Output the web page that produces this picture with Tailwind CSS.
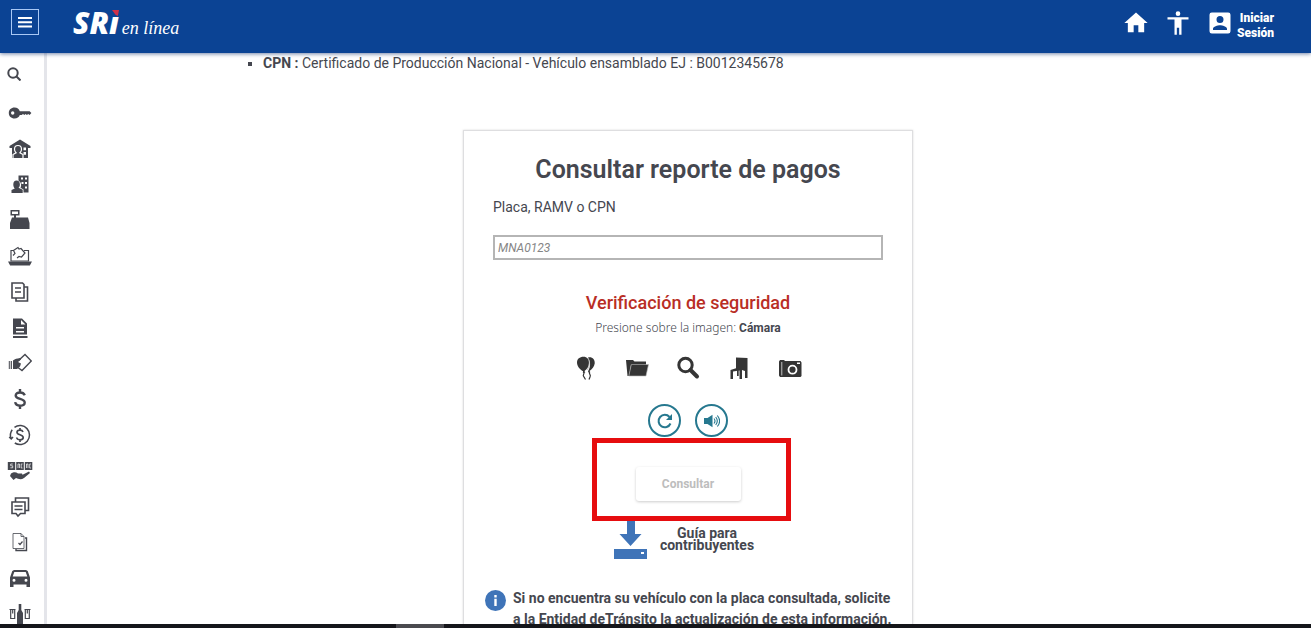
<!DOCTYPE html>
<html lang="es">
<head>
<meta charset="utf-8">
<meta name="viewport" content="width=device-width, initial-scale=1">
<title>SRI en línea</title>
<script src="https://cdn.jsdelivr.net/npm/@tailwindcss/browser@4"></script>
</head>
<body class="flex h-screen flex-col overflow-hidden bg-white font-['Roboto','Liberation_Sans',sans-serif] text-[#45474f]">
<header class="relative z-10 flex h-[53px] shrink-0 items-start bg-[#0b4394] pr-9 pl-[11px] text-white shadow-[0_1px_4px_rgba(20,50,110,0.6)]">
  <button type="button" aria-label="Menú" class="mt-[9px] flex h-[26px] w-7 items-center justify-center border border-[#a9c8f5]">
    <svg class="h-[11px] w-[14px]" viewBox="0 0 14 11" fill="currentColor"><path d="M0 0h14v2H0zM0 4.200h14v2H0zM0 8.400h14v2H0z"/></svg>
  </button>
  <a href="#" class="relative ml-[34px] flex h-[53px] items-baseline gap-[3px]">
    <span class="font-['Open_Sans',sans-serif] text-[30px] leading-[46px] font-extrabold italic">SRı</span>
    <span class="font-['Liberation_Serif',serif] text-[18px] leading-[46px] italic">en línea</span>
    <svg class="absolute top-[10px] left-[39px] h-[6px] w-[7px]" viewBox="0 0 6 5"><path d="M0 0h6L5 5 3 4z" fill="#cf3149"/></svg>
  </a>
  <nav class="ml-auto flex items-start" aria-label="Usuario">
    <a href="#" aria-label="Inicio" class="mt-[9px] mr-[14px]"><svg class="h-7 w-7" viewBox="0 0 24 24" fill="currentColor"><path d="M10 20v-6h4v6h5v-8h3L12 3 2 12h3v8z"/></svg></a>
    <a href="#" aria-label="Accesibilidad" class="mt-[9px] mr-[14px]"><svg class="h-7 w-7" viewBox="0 0 24 24" fill="currentColor"><path d="M12 2a2 2 0 1 1 0 4 2 2 0 0 1 0-4zm9 7h-6v13h-2v-6h-2v6H9V9H3V7h18z"/></svg></a>
    <a href="#" class="mt-[9px] mr-px flex gap-[3px] text-right text-[12px] leading-[15px] font-black">
      <svg class="h-7 w-7" viewBox="0 0 24 24" fill="currentColor"><path d="M3 5v14a2 2 0 0 0 2 2h14a2 2 0 0 0 2-2V5a2 2 0 0 0-2-2H5a2 2 0 0 0-2 2zm12 4a3 3 0 1 1-6 0 3 3 0 0 1 6 0zm-9 8c0-2 4-3.100 6-3.100s6 1.100 6 3.100v1H6z"/></svg>
      <span class="mt-[2px]">Iniciar<br>Sesión</span>
    </a>
  </nav>
</header>
<div class="flex min-h-0 flex-1">
  <aside class="w-[47px] shrink-0 overflow-hidden border-r-[3px] border-[#e4e5ea] text-[#45474f]">
    <button type="button" aria-label="Buscar" class="flex h-[42px] w-7 items-center justify-center"><svg class="h-[14px] w-[14px]" viewBox="0 0 14 14" fill="none" stroke="currentColor" stroke-width="2"><circle cx="6" cy="6" r="4.700"/><path d="m9.500 9.500 4 4"/></svg></button>
    <ul class="grid h-[537px] w-10 auto-rows-fr place-items-center [&_a]:block [&_svg]:h-6 [&_svg]:w-6">
      <li><a href="#" aria-label="Clave"><svg viewBox="0 0 24 24" fill="currentColor"><path fill-rule="evenodd" d="M6.500 6.500c2.800 0 4.600 1.700 5.300 3.800h9.800l1.800 1.700-1.800 1.900-1.400-.8-1.300 1-1.300-1-1.300 1-1.300-1-1.300.8h-1.900c-.8 2.100-2.500 3.600-5.300 3.600C3.200 17.500.8 15.200.8 12s2.400-5.500 5.700-5.500zM4.700 10.300a1.700 1.700 0 1 0 0 3.400 1.700 1.700 0 0 0 0-3.400z"/></svg></a></li>
      <li><a href="#" aria-label="Domicilio"><svg viewBox="0 0 24 24" fill="currentColor"><path fill-rule="evenodd" d="M12 2.500 22.500 9v2H20v10H4V11H1.500V9zM15.500 10.500v2.700H18v-2.700zm0 4.500v2.700H18V15z"/><path d="M10 8.500c2.300 0 3.500 1.500 3.500 3.800 0 1.500-.6 2.700-1.500 3.500l3 1.700V21M5 21v-3.500l3-1.700c-.9-.8-1.500-2-1.500-3.500 0-2.300 1.200-3.800 3.500-3.800" fill="none" stroke="#fff" stroke-width="1.200"/></svg></a></li>
      <li><a href="#" aria-label="Empresa"><svg viewBox="0 0 24 24" fill="currentColor"><path fill-rule="evenodd" d="M10.500 3.500h10v17h-5v-3l-3-1.700c1-2 1.200-5-2-7.300zm2.500 2v2h2v-2zm4 0v2h2v-2zM13.500 10v2h2v-2zm3.500 0v2h2v-2zm0 4.500v2h2v-2z"/><path d="M8.500 8.500c2.200 0 3.400 1.600 3.400 3.900 0 1.500-.6 2.700-1.400 3.400l4.200 2V21H3.500v-3.100l3.300-1.500c-1-.8-1.500-2.200-1.500-3.900 0-2.400 1.200-4 3.200-4z"/></svg></a></li>
      <li><a href="#" aria-label="Facturación"><svg viewBox="0 0 24 24" fill="currentColor"><path fill-rule="evenodd" d="M2.500 2h9v5.500H8V9.500h12l1.500 5.500v6h-19.500V15l2-5.500h2v-2H2.500zM4 3.400v2.700h6V3.400z"/></svg></a></li>
      <li><a href="#" aria-label="Declaraciones"><svg viewBox="0 0 24 24" fill="none" stroke="currentColor" stroke-width="1.200"><path d="M6 6.500H3V17h17.500V6.500H16"/><path d="M5 11.500 7 9.500 5.500 6.500l3-2 1.500-1 1 1.500 2-.5 4 4.500-3.500 4-2.500-.5-2 1.500"/><path d="M1 18h22l-1.500 3h-19z" fill="currentColor"/></svg></a></li>
      <li><a href="#" aria-label="Anexos"><svg viewBox="0 0 24 24" fill="none" stroke="currentColor" stroke-width="1.600"><path d="M4 3h10.500L16 4.500V18H4zM16 7h3.500v14H8v-3M7 8h6M7 12h6"/></svg></a></li>
      <li><a href="#" aria-label="Certificados"><svg viewBox="0 0 24 24" fill="currentColor"><path fill-rule="evenodd" d="M5 2.500h9l5 5V18.500H5zM13 4v4.500h4.500zM8 11v1.400h8V11zm0 4v1.400h8V15zM5 20h14.500v2H5z"/></svg></a></li>
      <li><a href="#" aria-label="Devoluciones"><svg viewBox="0 0 24 24" fill="currentColor"><path d="m10.500 9.500 6.500-6L23.300 10 14 19.500l-4-3" fill="none" stroke="currentColor" stroke-width="1.400"/><path d="M5 9.500c2-1.600 4-2 7-2.500l1 1.500-3 2.600 3 1.500-1 3-3 2.400H5zM.8 10h1v8h-1zM2.700 10h1.200v8H2.700z"/></svg></a></li>
      <li><a href="#" aria-label="Pagos"><svg viewBox="0 0 24 24" fill="none" stroke="currentColor" stroke-width="2.400"><path d="M12 2v4m0 12v4M16.800 8.200C16 6.500 14.400 5.500 12 5.500c-2.500 0-4.300 1.100-4.300 3 0 4.300 9 2.500 9 7 0 2-1.900 3.200-4.500 3.200-2.800 0-4.700-1.200-5-3.500"/></svg></a></li>
      <li><a href="#" aria-label="Reintegros"><svg viewBox="0 0 24 24" fill="none" stroke="currentColor" stroke-width="1.500"><path d="M6.500 4.300a9.500 9.500 0 1 1 .3 15.700M3 15.500a9.500 9.500 0 0 1 1.200-8.700M1.200 14l2 2 1.800-2"/><path d="M12 5v2m0 10v2M15 9c-.5-1.300-1.600-1.800-3-1.800-1.700 0-3 .7-3 2.100 0 3.100 6.200 1.900 6.200 5.200 0 1.500-1.300 2.300-3.100 2.300-1.900 0-3.200-.8-3.400-2.300" stroke-width="1.700"/></svg></a></li>
      <li><a href="#" aria-label="Cobros"><svg class="overflow-visible" viewBox="0 0 24 24" fill="currentColor"><path d="M-.2 3h7.400v8H-.2zM8.200 3h7.600v8H8.200zM16.800 3h7.500v8h-7.500z"/><path d="M4.800 5H2.700v1.800h2v2H2.400M10 5v4m0-4h1.500v4M14.500 5h-1.300v4h1.300M18.500 5v4m0-4H20v4M23 5h-1.300v4H23" fill="none" stroke="#fff" stroke-width=".7"/><path d="M3 14.500c3-2 5-1.500 7 0h4l.5 1.300L21 12.500l1 1.500-6 5c-2 1.500-4 1.500-6 .8L8 19l-2.500 2L2 17z"/></svg></a></li>
      <li><a href="#" aria-label="Mensajes"><svg viewBox="0 0 24 24" fill="none" stroke="currentColor" stroke-width="1.600"><path d="M4 7h13v11.500h-4.500L10 21l-2-2.500H4zM7.500 6.500V3h13v12.500H17M6.500 11h8M6.500 14.500h8"/></svg></a></li>
      <li><a href="#" aria-label="Trámites"><svg viewBox="0 0 24 24" fill="none" stroke="currentColor"><path d="M5 3.500h8l3 3v12H5zM13 3.500v3h3" stroke-width=".8"/><path d="M17 8h1.500v12.500H8v-1.500" stroke-width="1.400"/><path d="m10.500 13 1.500 1.500 2.500-3" stroke-width="1.200"/></svg></a></li>
      <li><a href="#" aria-label="Vehículos"><svg viewBox="0 0 24 24" fill="currentColor"><path fill-rule="evenodd" d="M6 4h12l1.700 1 2.300 6.500V21h-3.500v-2.500h-13V21H2v-9.500L4.300 5zm.3 2L4.700 10.500h14.600L17.700 6zM6 12.700a1.500 1.500 0 1 0 0 3 1.500 1.500 0 0 0 0-3zm12 0a1.500 1.500 0 1 0 0 3 1.500 1.500 0 0 0 0-3z"/></svg></a></li>
      <li><a href="#" aria-label="Consumos especiales"><svg viewBox="0 0 24 24" fill="currentColor"><path d="M10.700 2h2.600v6l1.700 3v11H9V11l1.700-3z"/><path d="M2.700 7.500h4v9h-4zM17.300 7.500h4v9h-4zM4.700 7.500v4M19.300 7.500v4M1.500 7.500h6M16.500 7.500h6" fill="none" stroke="currentColor" stroke-width="1.200"/></svg></a></li>
    </ul>
  </aside>
  <main class="min-w-0 flex-1 overflow-hidden pl-[18px]">
    <ul class="ml-[198px] list-[square] text-[14px] leading-5">
      <li><strong>CPN :</strong> Certificado de Producción Nacional - Vehículo ensamblado EJ : B0012345678</li>
    </ul>
    <section class="mx-auto mt-[57px] w-full max-w-[450px] border border-[#dedee0] pt-6 pb-8 shadow-[0_0_2px_rgba(0,0,0,0.15)]">
      <form class="px-[29px] text-center">
        <h1 class="text-[25px] leading-[30px] font-semibold">Consultar reporte de pagos</h1>
        <label for="placa" class="mt-3 block text-left text-[14px] leading-5">Placa, RAMV o CPN</label>
        <input id="placa" type="text" placeholder="MNA0123" class="mt-[18px] block h-[25px] w-full border-2 border-[#b5b5b5] px-[3px] text-[12px] placeholder:text-[#858585] placeholder:italic">
        <h2 class="mt-[31px] text-[18px] leading-6 font-medium text-[#b92e25]">Verificación de seguridad</h2>
        <p class="mt-[5px] text-[12px] leading-4"><span class="font-['Noto_Sans',sans-serif] font-light">Presione sobre la imagen:</span> <strong>Cámara</strong></p>
        <div class="mt-5 flex justify-center gap-[27px] text-[#353535] [&_svg]:h-6 [&_svg]:w-6">
          <button type="button" aria-label="Globos"><svg viewBox="0 0 24 24" fill="currentColor"><path d="M14 1.500c4-1 7.200 1.800 6.700 6-.5 3-2.500 6-5.200 7.500l1 1.200H14l.3-1.500c2.200-3.500 2.700-9-.3-13.200z"/><path d="M9.500.8c3.500 0 5.700 2.500 5.500 6.200-.2 3.500-2 6.500-4.500 8l.8 1.700H8.800l.3-1.500C5.500 13.500 3 10 3 6.500 3 3 5.700.8 9.500.8z"/><path d="M9.500 16c2 2-2 3 .5 5l1.500 2.500M15.500 16c-1 2 2 3 .5 5l-1 2.500" fill="none" stroke="currentColor" stroke-width="1.200"/><path d="M14.300 2.500c1.700 4 1.200 8.500-1.300 11.500" fill="none" stroke="#999" stroke-width=".6"/></svg></button>
          <button type="button" aria-label="Carpeta"><svg viewBox="0 0 24 24" fill="currentColor"><path d="M1 4h7l1.500 1.500H21V9H6L4 20H2.500z"/><path d="M6.300 8.500H23.500l-2.500 11.500H3.800z" stroke="#bbb" stroke-width=".6"/></svg></button>
          <button type="button" aria-label="Lupa"><svg viewBox="0 0 24 24" fill="none" stroke="currentColor"><circle cx="9.500" cy="9" r="6.700" stroke-width="3"/><path d="m14.500 14 6.500 6.500" stroke-width="4" stroke-linecap="round"/></svg></button>
          <button type="button" aria-label="Silla"><svg viewBox="0 0 24 24" fill="currentColor"><path d="M9 1.500 20.500 2v20H18v-7l-3-1v9h-2.500v-8.500L6 15.500V23H3.500v-9L9 12.200z"/><path d="M10 14h1.700v6H10z"/></svg></button>
          <button type="button" aria-label="Cámara"><svg viewBox="0 0 24 24" fill="currentColor"><path fill-rule="evenodd" d="M2 4h4l1 1h15.500l1 1.500V20l-1 1H2l-1-1.500V5.500zM3.500 6v13.500h.7V6zM19 6.500V8h3V6.500zm-4.500 2.300a4.900 4.900 0 1 0 0 9.800 4.900 4.900 0 0 0 0-9.800zm0 1.800a3.100 3.100 0 1 1 0 6.200 3.100 3.100 0 0 1 0-6.200z"/></svg></button>
        </div>
        <div class="mt-6 flex justify-center gap-[14px] text-[#26788f]">
          <button type="button" aria-label="Recargar" class="flex h-[33px] w-[33px] items-center justify-center rounded-full border-2 border-current"><svg class="h-4 w-4" viewBox="0 0 16 16" fill="none" stroke="currentColor" stroke-width="2"><path d="M13.500 10.500a6.200 6.200 0 1 1-1-6.500"/><path d="M15 1v6H9z" fill="currentColor" stroke="none"/></svg></button>
          <button type="button" aria-label="Escuchar" class="flex h-[33px] w-[33px] items-center justify-center rounded-full border-2 border-current"><svg class="h-4 w-4" viewBox="0 0 16 16" fill="none" stroke="currentColor" stroke-width="1.100"><path d="M0 5h3.500L8.500 1.800v12.400L3.500 11H0z" fill="currentColor" stroke="none"/><path d="M10 5.500c1.200 1.500 1.200 3.500 0 5M11.700 4c2 2.500 2 5.500 0 8M13.300 2.500c3 3.500 3 7.500 0 11"/></svg></button>
        </div>
        <div class="relative mx-auto mt-[30px] w-[105px]">
          <button type="submit" disabled class="h-[34px] w-full rounded-[3px] text-[12px] font-bold text-[#bdbdbd] shadow-[0_1px_3px_rgba(0,0,0,0.2)]">Consultar</button>
          <span class="pointer-events-none absolute -top-[29px] -right-[50px] -bottom-5 -left-11 border-[5px] border-[#e60d0f]"></span>
        </div>
      </form>
      <a href="#" class="mx-auto mt-5 flex w-fit items-start gap-[13px] pr-2 text-center text-[14px] leading-3 font-bold">
        <svg class="h-[38px] w-[33px]" viewBox="0 0 33 38" fill="#3f74b8"><path d="M13 0h8v13h6.500L16.500 25 5.500 13H13z"/><path fill-rule="evenodd" d="M0 28h33v10H0zm27 3v2h3v-2z"/></svg>
        <span class="mt-[6px]">Guía para<br>contribuyentes</span>
      </a>
      <div class="mt-[29px] flex gap-[7px] pr-4 pl-[21px]">
        <svg class="mt-[2px] h-[21px] w-[21px] shrink-0" viewBox="0 0 21 21"><circle cx="10.500" cy="10.500" r="10.500" fill="#3f74b8"/><path d="M9.300 5h2.400v2.400H9.300zm0 3.800h2.400V16H9.300z" fill="#fff"/></svg>
        <p class="text-[14px] leading-[21px] font-bold">Si no encuentra su vehículo con la placa consultada, solicite a la Entidad deTránsito la actualización de esta información.</p>
      </div>
    </section>
  </main>
</div>
<div class="flex h-1 shrink-0 bg-[#15161a]"><span class="ml-[396px] w-12 bg-[#4a4a4f]"></span></div>
</body>
</html>
